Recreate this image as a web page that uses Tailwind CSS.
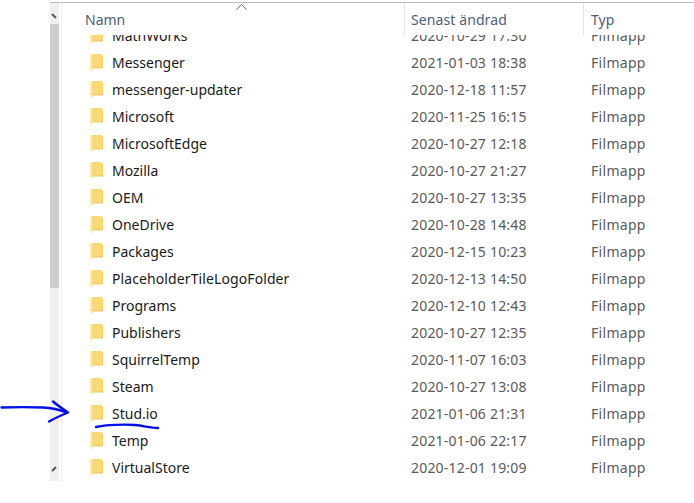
<!DOCTYPE html>
<html><head><meta charset="utf-8"><script src="https://cdn.jsdelivr.net/npm/@tailwindcss/browser@4"></script></head>
<body class="bg-white w-[694px] h-[503px] overflow-hidden relative font-['Noto_Sans',sans-serif]">
<svg width="0" height="0" class="absolute"><defs>
<symbol id="f" viewBox="0 0 13 18"><path d="M3 0H8.5L9.5 1.5H13V14H3Z" fill="#fad25f"/><path d="M3.5 0H12V14H3.5Z" fill="#fcd977"/><path d="M0 0.5L3 0V15L1.8 17.5L0 15Z" fill="#fde9a6"/><path d="M3 0V15" stroke="#e9c668" stroke-width="0.6"/><path d="M11 13H13V14.5H4V13Z" fill="#efcb6c"/></symbol>
</defs></svg>
<div class="h-[2px]"></div>
<div class="h-[1px] ml-[50px] bg-[#bdbdbd]"></div>
<div class="flex h-[478px] ml-[50px]">
  <div class="w-[9px] bg-[#efefef] relative flex flex-col">
    <svg class="absolute left-[1px] top-[10px]" width="7" height="7" viewBox="0 0 7 7"><path d="M1 1L5 5" stroke="#555" stroke-width="2"/></svg>
    <div class="h-[21px]"></div>
    <div class="h-[264px] bg-[#cdcdcd]"></div>
    <svg class="absolute left-[1px] top-[463px]" width="7" height="7" viewBox="0 0 7 7"><path d="M1 5L5 1" stroke="#555" stroke-width="2"/></svg>
  </div>
  <div class="w-[2px]"></div>
  <div class="w-[1px] bg-[#efefef]"></div>
  <div class="flex-1 flex flex-col min-w-0 relative">
    <div class="h-[32px] flex text-[14px] text-[#4c607a] shrink-0 relative">
      <svg class="absolute left-[174px] top-[1px]" width="11" height="6" viewBox="0 0 11 6"><path d="M0.5 5.5L5.5 0.5L10.5 5.5" fill="none" stroke="#666" stroke-width="1"/></svg>
      <div class="w-[343px] pl-[23px] pt-[6px] border-r border-[#e5e5e5]">Namn</div>
      <div class="w-[179px] pl-[6px] pt-[6px] border-r border-[#e5e5e5] tracking-[0.1px]">Senast ändrad</div>
      <div class="pl-[7px] pt-[6px]">Typ</div>
    </div>
    <div class="flex-1 overflow-hidden flex flex-col text-[14px] text-[#1a1a1a]">
      <div class="-mt-[13px] h-[27px] flex items-center shrink-0"><svg class="ml-[28px] w-[13px] h-[18px]"><use href="#f"/></svg><span class="ml-[9px] w-[299px]">MathWorks</span><span class="w-[180px] text-[#5a5a5a] tracking-[0.2px]">2020-10-29 17:30</span><span class="text-[#5a5a5a] tracking-[0.3px]">Filmapp</span></div>
      <div class="h-[27px] flex items-center shrink-0"><svg class="ml-[28px] w-[13px] h-[18px]"><use href="#f"/></svg><span class="ml-[9px] w-[299px]">Messenger</span><span class="w-[180px] text-[#5a5a5a] tracking-[0.2px]">2021-01-03 18:38</span><span class="text-[#5a5a5a] tracking-[0.3px]">Filmapp</span></div>
      <div class="h-[27px] flex items-center shrink-0"><svg class="ml-[28px] w-[13px] h-[18px]"><use href="#f"/></svg><span class="ml-[9px] w-[299px]">messenger-updater</span><span class="w-[180px] text-[#5a5a5a] tracking-[0.2px]">2020-12-18 11:57</span><span class="text-[#5a5a5a] tracking-[0.3px]">Filmapp</span></div>
      <div class="h-[27px] flex items-center shrink-0"><svg class="ml-[28px] w-[13px] h-[18px]"><use href="#f"/></svg><span class="ml-[9px] w-[299px]">Microsoft</span><span class="w-[180px] text-[#5a5a5a] tracking-[0.2px]">2020-11-25 16:15</span><span class="text-[#5a5a5a] tracking-[0.3px]">Filmapp</span></div>
      <div class="h-[27px] flex items-center shrink-0"><svg class="ml-[28px] w-[13px] h-[18px]"><use href="#f"/></svg><span class="ml-[9px] w-[299px]">MicrosoftEdge</span><span class="w-[180px] text-[#5a5a5a] tracking-[0.2px]">2020-10-27 12:18</span><span class="text-[#5a5a5a] tracking-[0.3px]">Filmapp</span></div>
      <div class="h-[27px] flex items-center shrink-0"><svg class="ml-[28px] w-[13px] h-[18px]"><use href="#f"/></svg><span class="ml-[9px] w-[299px]">Mozilla</span><span class="w-[180px] text-[#5a5a5a] tracking-[0.2px]">2020-10-27 21:27</span><span class="text-[#5a5a5a] tracking-[0.3px]">Filmapp</span></div>
      <div class="h-[27px] flex items-center shrink-0"><svg class="ml-[28px] w-[13px] h-[18px]"><use href="#f"/></svg><span class="ml-[9px] w-[299px]">OEM</span><span class="w-[180px] text-[#5a5a5a] tracking-[0.2px]">2020-10-27 13:35</span><span class="text-[#5a5a5a] tracking-[0.3px]">Filmapp</span></div>
      <div class="h-[27px] flex items-center shrink-0"><svg class="ml-[28px] w-[13px] h-[18px]"><use href="#f"/></svg><span class="ml-[9px] w-[299px]">OneDrive</span><span class="w-[180px] text-[#5a5a5a] tracking-[0.2px]">2020-10-28 14:48</span><span class="text-[#5a5a5a] tracking-[0.3px]">Filmapp</span></div>
      <div class="h-[27px] flex items-center shrink-0"><svg class="ml-[28px] w-[13px] h-[18px]"><use href="#f"/></svg><span class="ml-[9px] w-[299px]">Packages</span><span class="w-[180px] text-[#5a5a5a] tracking-[0.2px]">2020-12-15 10:23</span><span class="text-[#5a5a5a] tracking-[0.3px]">Filmapp</span></div>
      <div class="h-[27px] flex items-center shrink-0"><svg class="ml-[28px] w-[13px] h-[18px]"><use href="#f"/></svg><span class="ml-[9px] w-[299px] tracking-[0.1px]">PlaceholderTileLogoFolder</span><span class="w-[180px] text-[#5a5a5a] tracking-[0.2px]">2020-12-13 14:50</span><span class="text-[#5a5a5a] tracking-[0.3px]">Filmapp</span></div>
      <div class="h-[27px] flex items-center shrink-0"><svg class="ml-[28px] w-[13px] h-[18px]"><use href="#f"/></svg><span class="ml-[9px] w-[299px]">Programs</span><span class="w-[180px] text-[#5a5a5a] tracking-[0.2px]">2020-12-10 12:43</span><span class="text-[#5a5a5a] tracking-[0.3px]">Filmapp</span></div>
      <div class="h-[27px] flex items-center shrink-0"><svg class="ml-[28px] w-[13px] h-[18px]"><use href="#f"/></svg><span class="ml-[9px] w-[299px]">Publishers</span><span class="w-[180px] text-[#5a5a5a] tracking-[0.2px]">2020-10-27 12:35</span><span class="text-[#5a5a5a] tracking-[0.3px]">Filmapp</span></div>
      <div class="h-[27px] flex items-center shrink-0"><svg class="ml-[28px] w-[13px] h-[18px]"><use href="#f"/></svg><span class="ml-[9px] w-[299px]">SquirrelTemp</span><span class="w-[180px] text-[#5a5a5a] tracking-[0.2px]">2020-11-07 16:03</span><span class="text-[#5a5a5a] tracking-[0.3px]">Filmapp</span></div>
      <div class="h-[27px] flex items-center shrink-0"><svg class="ml-[28px] w-[13px] h-[18px]"><use href="#f"/></svg><span class="ml-[9px] w-[299px]">Steam</span><span class="w-[180px] text-[#5a5a5a] tracking-[0.2px]">2020-10-27 13:08</span><span class="text-[#5a5a5a] tracking-[0.3px]">Filmapp</span></div>
      <div class="h-[27px] flex items-center shrink-0"><svg class="ml-[28px] w-[13px] h-[18px]"><use href="#f"/></svg><span class="ml-[9px] w-[299px]">Stud.io</span><span class="w-[180px] text-[#5a5a5a] tracking-[0.2px]">2021-01-06 21:31</span><span class="text-[#5a5a5a] tracking-[0.3px]">Filmapp</span></div>
      <div class="h-[27px] flex items-center shrink-0"><svg class="ml-[28px] w-[13px] h-[18px]"><use href="#f"/></svg><span class="ml-[9px] w-[299px]">Temp</span><span class="w-[180px] text-[#5a5a5a] tracking-[0.2px]">2021-01-06 22:17</span><span class="text-[#5a5a5a] tracking-[0.3px]">Filmapp</span></div>
      <div class="h-[27px] flex items-center shrink-0"><svg class="ml-[28px] w-[13px] h-[18px]"><use href="#f"/></svg><span class="ml-[9px] w-[299px]">VirtualStore</span><span class="w-[180px] text-[#5a5a5a] tracking-[0.2px]">2020-12-01 19:09</span><span class="text-[#5a5a5a] tracking-[0.3px]">Filmapp</span></div>
    </div>
  </div>
</div>
<svg class="absolute left-0 top-0 pointer-events-none" width="694" height="503" fill="none" stroke="#0410e8" stroke-linecap="round" stroke-linejoin="round" stroke-width="2.4">
  <path d="M1.5 407.5C15 407 30 407 43 407.5C52 408 60 410 67 412.5"/>
  <path d="M53 401.5C57 405 63 409 68 412.5C62 415 55 418 49 421.5"/>
  <path d="M96 427C105 425 125 424 135 425C145 426 150 428 158 428"/>
</svg>
</body></html>
